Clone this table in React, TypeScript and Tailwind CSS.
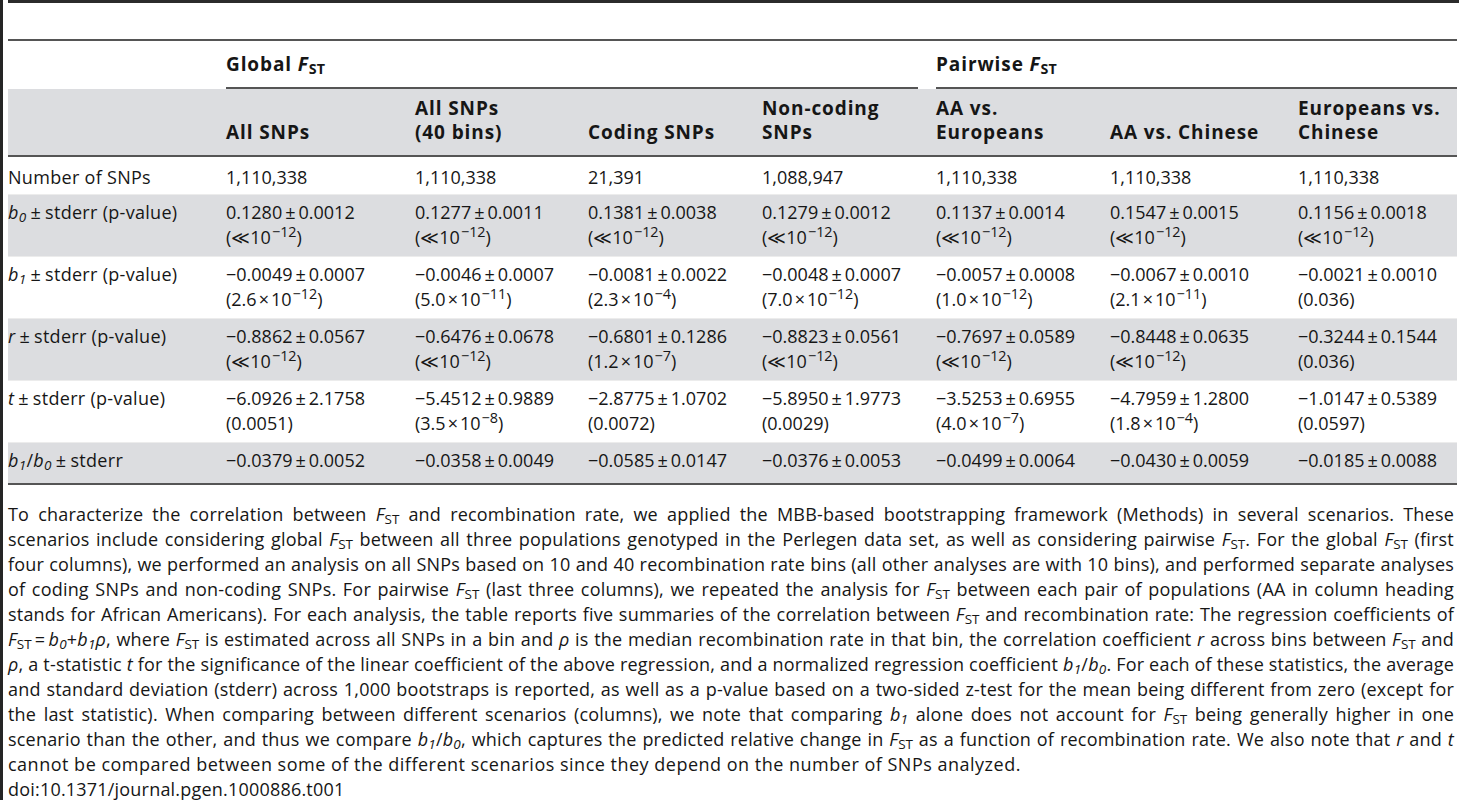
import React from "react";

const F = () => (
  <>
    <i>F</i>
    <sub className="not-italic tracking-normal">ST</sub>
  </>
);
const B = ({ n }: { n: number }) => (
  <i>
    b<sub>{n}</sub>
  </i>
);
const Sup = ({ e }: { e: string }) => <sup className="ml-[1px] text-[80%] tracking-normal">{e}</sup>;
const LL = () => (
  <>
    (≪10
    <Sup e="−12" />)
  </>
);
const Sci = ({ m, e }: { m: string; e: string }) => (
  <>
    ({m}
    <span className="mx-[2px]">×</span>10
    <Sup e={e} />)
  </>
);
const Val = ({ v }: { v: string }) => {
  const parts = v.split("±");
  if (parts.length < 2) return <>{v}</>;
  return (
    <>
      {parts[0]}
      <span className="mx-[3px]">±</span>
      {parts[1]}
    </>
  );
};
const Pm = () => <span className="mx-[4px]">±</span>;

type Cell = { v: string; p?: React.ReactNode };

const cols = "grid grid-cols-[218px_189px_173px_174px_174px_174px_188px_1fr]";

const rows: { label: React.ReactNode; shaded: boolean; cells: Cell[]; tall: boolean }[] = [
  {
    label: <>Number of SNPs</>,
    shaded: false,
    tall: false,
    cells: ["1,110,338", "1,110,338", "21,391", "1,088,947", "1,110,338", "1,110,338", "1,110,338"].map((v) => ({ v })),
  },
  {
    label: (
      <>
        <B n={0} />
        <Pm />
        stderr (p-value)
      </>
    ),
    shaded: true,
    tall: true,
    cells: [
      { v: "0.1280±0.0012", p: <LL /> },
      { v: "0.1277±0.0011", p: <LL /> },
      { v: "0.1381±0.0038", p: <LL /> },
      { v: "0.1279±0.0012", p: <LL /> },
      { v: "0.1137±0.0014", p: <LL /> },
      { v: "0.1547±0.0015", p: <LL /> },
      { v: "0.1156±0.0018", p: <LL /> },
    ],
  },
  {
    label: (
      <>
        <B n={1} />
        <Pm />
        stderr (p-value)
      </>
    ),
    shaded: false,
    tall: true,
    cells: [
      { v: "−0.0049±0.0007", p: <Sci m="2.6" e="−12" /> },
      { v: "−0.0046±0.0007", p: <Sci m="5.0" e="−11" /> },
      { v: "−0.0081±0.0022", p: <Sci m="2.3" e="−4" /> },
      { v: "−0.0048±0.0007", p: <Sci m="7.0" e="−12" /> },
      { v: "−0.0057±0.0008", p: <Sci m="1.0" e="−12" /> },
      { v: "−0.0067±0.0010", p: <Sci m="2.1" e="−11" /> },
      { v: "−0.0021±0.0010", p: <>(0.036)</> },
    ],
  },
  {
    label: (
      <>
        <i>r</i>
        <Pm />
        stderr (p-value)
      </>
    ),
    shaded: true,
    tall: true,
    cells: [
      { v: "−0.8862±0.0567", p: <LL /> },
      { v: "−0.6476±0.0678", p: <LL /> },
      { v: "−0.6801±0.1286", p: <Sci m="1.2" e="−7" /> },
      { v: "−0.8823±0.0561", p: <LL /> },
      { v: "−0.7697±0.0589", p: <LL /> },
      { v: "−0.8448±0.0635", p: <LL /> },
      { v: "−0.3244±0.1544", p: <>(0.036)</> },
    ],
  },
  {
    label: (
      <>
        <i>t</i>
        <Pm />
        stderr (p-value)
      </>
    ),
    shaded: false,
    tall: true,
    cells: [
      { v: "−6.0926±2.1758", p: <>(0.0051)</> },
      { v: "−5.4512±0.9889", p: <Sci m="3.5" e="−8" /> },
      { v: "−2.8775±1.0702", p: <>(0.0072)</> },
      { v: "−5.8950±1.9773", p: <>(0.0029)</> },
      { v: "−3.5253±0.6955", p: <Sci m="4.0" e="−7" /> },
      { v: "−4.7959±1.2800", p: <Sci m="1.8" e="−4" /> },
      { v: "−1.0147±0.5389", p: <>(0.0597)</> },
    ],
  },
  {
    label: (
      <>
        <B n={1} />/<B n={0} />
        <Pm />
        stderr
      </>
    ),
    shaded: true,
    tall: false,
    cells: ["−0.0379±0.0052", "−0.0358±0.0049", "−0.0585±0.0147", "−0.0376±0.0053", "−0.0499±0.0064", "−0.0430±0.0059", "−0.0185±0.0088"].map(
      (v) => ({ v })
    ),
  },
];

const headers: React.ReactNode[] = [
  <>All SNPs</>,
  <>
    All SNPs
    <br />
    (40 bins)
  </>,
  <>Coding SNPs</>,
  <>
    Non-coding
    <br />
    SNPs
  </>,
  <>
    AA vs.
    <br />
    Europeans
  </>,
  <>AA vs. Chinese</>,
  <>
    Europeans vs.
    <br />
    Chinese
  </>,
];

const captionLines: React.ReactNode[] = [
  <>
    To characterize the correlation between <F /> and recombination rate, we applied the MBB-based bootstrapping framework (Methods) in several scenarios. These
  </>,
  <>
    scenarios include considering global <F /> between all three populations genotyped in the Perlegen data set, as well as considering pairwise <F />. For the global <F /> (first
  </>,
  <>
    four columns), we performed an analysis on all SNPs based on 10 and 40 recombination rate bins (all other analyses are with 10 bins), and performed separate analyses
  </>,
  <>
    of coding SNPs and non-coding SNPs. For pairwise <F /> (last three columns), we repeated the analysis for <F /> between each pair of populations (AA in column heading
  </>,
  <>
    stands for African Americans). For each analysis, the table reports five summaries of the correlation between <F /> and recombination rate: The regression coefficients of
  </>,
  <>
    <F />
    {"\u2009=\u2009"}
    <B n={0} />+<B n={1} />
    <i>ρ</i>, where <F /> is estimated across all SNPs in a bin and <i>ρ</i> is the median recombination rate in that bin, the correlation coefficient <i>r</i> across bins between <F /> and
  </>,
  <>
    <i>ρ</i>, a t-statistic <i>t</i> for the significance of the linear coefficient of the above regression, and a normalized regression coefficient <B n={1} />/<B n={0} />. For each of these statistics, the average
  </>,
  <>
    and standard deviation (stderr) across 1,000 bootstraps is reported, as well as a p-value based on a two-sided z-test for the mean being different from zero (except for
  </>,
  <>
    the last statistic). When comparing between different scenarios (columns), we note that comparing <B n={1} /> alone does not account for <F /> being generally higher in one
  </>,
  <>
    scenario than the other, and thus we compare <B n={1} />/<B n={0} />, which captures the predicted relative change in <F /> as a function of recombination rate. We also note that <i>r</i> and <i>t</i>
  </>,
];

export default function App() {
  return (
    <div className="flex min-h-[800px] bg-white text-[#161616] font-['Open_Sans',sans-serif] text-[18px] leading-[25px] tracking-[0.3px]">
      <div className="w-[3px] shrink-0 bg-[#252525]" />
      <div className="ml-[5px] flex-1 min-w-0">
        <div className="h-[3px] bg-[#2b2b2b]" />
        <div className="h-[36px]" />
        <div className="mr-[2px] border-t-2 border-[#555]">
          {/* group header */}
          <div className={`${cols} font-bold text-[19px] tracking-[0.9px]`}>
            <div />
            <div className="col-span-4 mr-[18px] h-[48px] border-b-2 border-[#555] flex items-center">
              <span>
                Global <F />
              </span>
            </div>
            <div className="col-span-3 h-[48px] border-b-2 border-[#555] flex items-center">
              <span>
                Pairwise <F />
              </span>
            </div>
          </div>
          {/* column header */}
          <div className={`${cols} bg-[#dcdde0] border-b-2 border-[#555] pt-[7px] pb-[11px] font-bold text-[19px] tracking-[0.9px] leading-[24px]`}>
            <div />
            {headers.map((h, i) => (
              <div key={i} className="self-end">
                {h}
              </div>
            ))}
          </div>
          {rows.map((r, i) => (
            <div
              key={i}
              className={`${cols} ${r.shaded ? "bg-[#dcdde0]" : "bg-white"} ${r.tall ? "h-[62px] pt-[5px]" : i === 0 ? "h-[38px] pt-[8px]" : "h-[40px] pt-[5px]"} ${i === rows.length - 1 ? "" : "border-b border-[#ececec]"}`}
            >
              <div>{r.label}</div>
              {r.cells.map((c, j) => (
                <div key={j} className="tracking-normal">
                  <div>
                    <Val v={c.v} />
                  </div>
                  {c.p && <div>{c.p}</div>}
                </div>
              ))}
            </div>
          ))}
          <div className="h-[2px] bg-[#555]" />
        </div>
        <div className="mt-[17px] pr-[5px] tracking-[0.2px]">
          {captionLines.map((l, i) => (
            <div key={i} className="text-justify [text-align-last:justify] [word-spacing:-3px]">
              {l}
            </div>
          ))}
          <div className="tracking-[0.5px]">
            cannot be compared between some of the different scenarios since they depend on the number of SNPs analyzed.
          </div>
          <div className="tracking-[0.2px]">doi:10.1371/journal.pgen.1000886.t001</div>
        </div>
      </div>
    </div>
  );
}
